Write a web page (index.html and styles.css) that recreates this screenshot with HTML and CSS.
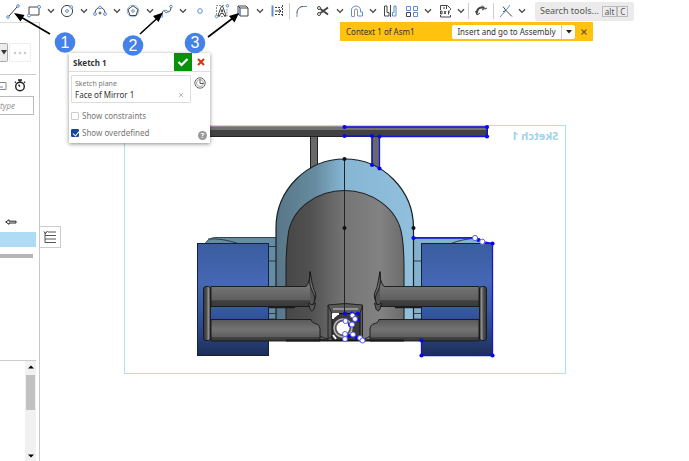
FILE: index.html
```html
<!DOCTYPE html>
<html lang="en">
<head>
<meta charset="utf-8">
<title>Sketch 1</title>
<link rel="stylesheet" href="styles.css">
</head>
<body>
<svg class="defs" width="0" height="0" aria-hidden="true">
  <symbol id="chev" viewBox="0 0 8 6"><path d="M1 1.2 4 4.4 7 1.2" fill="none" stroke="#444" stroke-width="1.3"/></symbol>
</svg>
<header class="toolbar">
  <button class="tool" aria-label="Line"><svg viewBox="0 0 16 16"><path d="M4 13 12 4" class="k"/><circle cx="3" cy="14" r="1.3" class="b"/><circle cx="13" cy="3" r="1.3" class="b"/></svg></button>
  <button class="tool pair" aria-label="Rectangle"><svg viewBox="0 0 16 16"><path d="M3 4h10v8H3z" class="k"/><circle cx="3" cy="12.5" r="1.5" class="b w"/><circle cx="13" cy="4" r="1.5" class="b w"/></svg></button><button class="more" aria-label="Rectangle options"><svg><use href="#chev"/></svg></button>
  <button class="tool pair" aria-label="Circle"><svg viewBox="0 0 16 16"><circle cx="8" cy="8" r="5.6" class="k"/><circle cx="8" cy="8" r="1.4" class="b"/><circle cx="12.2" cy="4" r="1.3" class="b w"/></svg></button><button class="more" aria-label="Circle options"><svg><use href="#chev"/></svg></button>
  <button class="tool pair" aria-label="Arc"><svg viewBox="0 0 16 16"><path d="M3 10a5 5.500 0 0 1 10 0" class="k"/><circle cx="3" cy="11" r="1.4" class="b w"/><circle cx="13" cy="11" r="1.4" class="b w"/><circle cx="8" cy="4.500" r="1.3" class="b w"/><path d="M6.500 10h3M8 8.500v3" class="k"/></svg></button><button class="more" aria-label="Arc options"><svg><use href="#chev"/></svg></button>
  <button class="tool pair" aria-label="Polygon"><svg viewBox="0 0 16 16"><circle cx="8" cy="8" r="5.800" class="b faint"/><path d="M8 2.800 13 6.500 11 12.500H5L3 6.500z" class="k"/><circle cx="8" cy="8" r="1.300" class="b"/></svg></button><button class="more" aria-label="Polygon options"><svg><use href="#chev"/></svg></button>
  <button class="tool pair" aria-label="Spline"><svg viewBox="0 0 16 16"><path d="M4 12C4 6 7 8 8 8.500S13 10 13 4" class="k"/><circle cx="3.500" cy="13" r="1.300" class="b w"/><circle cx="8" cy="8.500" r="1.300" class="b w"/><circle cx="13" cy="3.500" r="1.300" class="b w"/></svg></button><button class="more" aria-label="Spline options"><svg><use href="#chev"/></svg></button>
  <button class="tool" aria-label="Point"><svg viewBox="0 0 16 16"><circle cx="8" cy="8" r="2.300" class="b"/></svg></button>
  <button class="tool" aria-label="Text"><svg viewBox="0 0 16 16"><path d="M2.500 12V2.500H11M4 13.500H13V6" class="k dash faint"/><path d="M4 12.500 7.300 3.500h1.400L12 12.500H10L9.300 10.500H6.700L6 12.500zM7.200 8.800h1.600L8 6.500z" class="k"/><circle cx="13.500" cy="2.800" r="1.300" class="b"/><circle cx="2.500" cy="13.500" r="1.300" class="b w"/></svg></button>
  <button class="tool pair" aria-label="Use"><svg viewBox="0 0 16 16"><path d="M5 5h8v8H5zM5 5 3 3v8l2 2M3 3h8l2 2" class="k"/><path d="M5 5v8" class="b"/></svg></button><button class="more" aria-label="Use options"><svg><use href="#chev"/></svg></button>
  <button class="tool" aria-label="Dimension"><svg viewBox="0 0 16 16"><path d="M3.500 2.500v11" class="b t"/><path d="M6 4.500h7M6 11.500h7M13.500 2v12" class="k dash"/><path d="M6 8h6M10 6l2 2-2 2" class="k"/></svg></button>
  <i class="sep"></i>
  <button class="tool" aria-label="Fillet"><svg viewBox="0 0 16 16"><path d="M3 10C3 6 6 3.500 9 3.500" class="k"/><path d="M3 10v4M9 3.500h4" class="b"/></svg></button>
  <button class="tool pair" aria-label="Trim"><svg viewBox="0 0 16 16"><path d="M5.500 6 13 11.500M5.500 10 13 4.500" class="k t"/><circle cx="4" cy="5" r="1.500" class="k"/><circle cx="4" cy="11" r="1.500" class="k"/></svg></button><button class="more" aria-label="Trim options"><svg><use href="#chev"/></svg></button>
  <button class="tool pair" aria-label="Offset"><svg viewBox="0 0 16 16"><path d="M3.500 13V7a4.500 4 0 0 1 9 0v2h2v4H10" class="b"/><path d="M6.500 13V7.500a1.500 1.500 0 0 1 3 0V13M3.500 13.500h3" class="k faint"/></svg></button><button class="more" aria-label="Offset options"><svg><use href="#chev"/></svg></button>
  <button class="tool" aria-label="Mirror"><svg viewBox="0 0 16 16"><path d="M2.500 3v10H7V9.500H5V3zM8.500 2v12" class="k"/><path d="M14 3v10h-3.500V9.500h1.500V3z" class="b"/></svg></button>
  <button class="tool pair" aria-label="Pattern"><svg viewBox="0 0 16 16"><path d="M3.500 9.500h4v4h-4z" class="k"/><path d="M3.500 3.500h4v4h-4zM10.500 3.500h4v4h-4zM10.500 9.500h4v4h-4z" class="b"/></svg></button><button class="more" aria-label="Pattern options"><svg><use href="#chev"/></svg></button>
  <button class="tool pair" aria-label="Insert DXF"><svg viewBox="0 0 16 16"><path d="M4.500 7V2.500h7l3 3V7M4.500 12v2h10v-2M10.500 2.500V6M7 5h2" class="k"/><path d="M4.500 8v3H6V8zM8 8l2 3M10 8 8 11M12.500 11.500V8H14M12.500 9.500h1" class="k"/></svg></button><button class="more" aria-label="Insert options"><svg><use href="#chev"/></svg></button>
  <i class="sep"></i>
  <button class="tool" aria-label="Show dimension"><svg viewBox="0 0 16 16"><path d="M4 10.500C3.500 6 7 3.500 11 5" class="k t"/><path d="M2.500 8 4 12l3-2M9 2.500 12 5.500 9 7M12 6l2-1" class="k"/></svg></button>
  <i class="sep"></i>
  <button class="tool pair" aria-label="Constraint"><svg viewBox="0 0 16 16"><path d="M3 14 8.500 8 13 2" class="b"/><path d="M6 3.500 9 7.500l6 6M6 9l2.500-1.500" class="k"/></svg></button><button class="more" aria-label="Constraint options"><svg><use href="#chev"/></svg></button>
  <button class="search"><span>Search tools...</span><kbd>alt</kbd><kbd>C</kbd></button>
</header>
<main class="workspace">
  <aside class="sidebar">
    <div class="side-top">
      <button class="drop" aria-label="Open menu"><svg viewBox="0 0 6 5"><path d="M0 0h6L3 4.500z" fill="#333"/></svg></button>
      <button class="dots" aria-label="More"><svg viewBox="0 0 14 4"><circle cx="2" cy="2" r="1.300"/><circle cx="7" cy="2" r="1.300"/><circle cx="12" cy="2" r="1.300"/></svg></button>
    </div>
    <div class="side-tools">
      <svg class="tag" viewBox="0 0 7 8"><path d="M0 .5h6v7H0" fill="none" stroke="#888"/><path d="M0 5h3" stroke="#5b8bd0"/></svg>
      <svg class="watch" viewBox="0 0 12 13"><circle cx="6" cy="7.500" r="4.300" fill="none" stroke="#222" stroke-width="1.400"/><path d="M4 1h4M6 1v2M6 7.500 4.500 5.800M10 2.800l1 1M2 2.800l-1 1" fill="none" stroke="#222" stroke-width="1.400"/></svg>
    </div>
    <input class="filter" type="text" placeholder="type" aria-label="Filter by type">
    <svg class="back" viewBox="0 0 12 6"><path d="M.7 3 4 .8v1.400h7v1.800H4v1.300z" fill="#fff" stroke="#222"/></svg>
    <div class="selected"></div>
    <div class="rollback"></div>
    <div class="parts"><div class="scroll">
      <svg viewBox="0 0 6 4"><path d="M0 3.500 3 .5l3 3z"/></svg><i class="thumb"></i><svg class="down" viewBox="0 0 6 4"><path d="M0 .5 3 3.500 6 .5z"/></svg>
    </div></div>
  </aside>
  <section class="canvas">
    <svg class="model" viewBox="120 121 450 258" role="img" aria-label="Front view of the car model">
      <defs>
        <linearGradient id="shell"><stop offset="0" stop-color="#587687"/><stop offset=".28" stop-color="#668b9f"/><stop offset=".5" stop-color="#86b6d4"/><stop offset="1" stop-color="#91c0dd"/></linearGradient>
        <linearGradient id="nose"><stop offset="0" stop-color="#474747"/><stop offset=".2" stop-color="#505050"/><stop offset=".5" stop-color="#757575"/><stop offset=".8" stop-color="#828282"/><stop offset="1" stop-color="#6c6c6c"/></linearGradient>
        <linearGradient id="tire" x2="0" y2="1"><stop offset="0" stop-color="#3a5ca0"/><stop offset=".35" stop-color="#4668b4"/><stop offset=".6" stop-color="#3558a3"/><stop offset=".85" stop-color="#263f79"/><stop offset="1" stop-color="#1d2d57"/></linearGradient>
        <linearGradient id="slab" x2="0" y2="1"><stop offset="0" stop-color="#595959"/><stop offset=".45" stop-color="#737373"/><stop offset=".8" stop-color="#5f5f5f"/><stop offset=".84" stop-color="#404040"/><stop offset="1" stop-color="#393939"/></linearGradient>
        <linearGradient id="cap"><stop offset="0" stop-color="#333"/><stop offset=".45" stop-color="#505050"/><stop offset=".7" stop-color="#909090"/><stop offset="1" stop-color="#333"/></linearGradient>
        <g id="wing" stroke="#171717" stroke-width=".9">
          <path d="M211 286.500H306C309 283 310.500 277 310 271.500C312 281 312 286 315 292C317 298 314 302 311.500 306.500H211z" fill="url(#slab)"/>
          <path d="M310 272C308 288 313 290 314.500 297C315 303 312 307 310 304" fill="#555"/>
          <path d="M309 303C309 308 311 314 314 309L315.500 303C313 305 311 305 309 303z" fill="#565656"/>
          <path d="M211 319.500H311C313 326 319 321 320 329V341H211z" fill="url(#slab)"/>
          <rect x="203.500" y="286.500" width="7" height="54" rx="2.500" fill="url(#cap)"/>
        </g>
      </defs>
      <rect x="124.500" y="125.500" width="441" height="248" fill="#fff" stroke="#b3def3"/>
      <path d="M310.500 136H317.500V180H310.500zM372 136H379.500V180H372z" fill="#696969" stroke="#222"/>
      <rect x="202.500" y="127" width="285" height="9.500" fill="#424242" stroke="#222"/><path d="M203 128.500H487" stroke="#727272" stroke-width="3"/>
      <g stroke="#26343d" stroke-width=".9">
        <path d="M205 243.500C210 237 213 237.500 221 237.500H278V319H265V243.500z" fill="#648da4"/>
        <path d="M484 243.500C479 237 476 237.500 468 237.500H411V319H424V243.500z" fill="#84b1cb"/>
        <path d="M208 239Q222 238 238 243.500M478 238Q462 239 451 243.500M269 246.500H279M278.500 246.500V319M269 261H279M269 313.500H279M411.500 247V319M411.500 261H421M411.500 313.500H421" fill="none"/>
      </g>
      <rect x="197.500" y="243.500" width="71" height="112" fill="url(#tire)" stroke="#15203d"/>
      <rect x="421.500" y="243.500" width="71" height="112" fill="url(#tire)" stroke="#15203d"/>
      <path d="M276 319V228A68.750 69 0 0 1 413.500 228V319z" fill="url(#shell)"/>
      <path d="M276 319V228A68.750 69 0 0 1 413.500 228V319" fill="none" stroke="#182025" stroke-width="1.200"/>
      <path d="M286 340V270C286 250 287 245 288 236C291 207 319 190.500 344.500 190.500S398 207 402 236C403.500 245 404 250 404 270V340z" fill="url(#nose)" stroke="#222" stroke-width="1.100"/>
      <path d="M269 307.500H295M421 307.500H395" stroke="#1b1b1b" stroke-width="1.500"/>
      <use href="#wing"/><use href="#wing" transform="matrix(-1 0 0 1 690 0)"/>
      <path d="M286 340.500H404" stroke="#191919" stroke-width="2"/>
      <path d="M328 340V305Q345 302 362.500 305V340" fill="#5a5a5a" stroke="#222"/>
      <path d="M333 309H358" stroke="#929292" stroke-width="2"/>
      <path d="M332 340V313.500H360V340z" fill="#393939" stroke="#111"/>
      <path d="M333 319V314H339M333 335L336 339" stroke="#fff" stroke-width="2" fill="#fff"/>
      <circle cx="343" cy="328" r="9" fill="#555" stroke="#b6b6b6" stroke-width="1.500"/>
      <circle cx="343" cy="328" r="6.500" fill="#fff"/>
      <path d="M328 305 332 313.500M362.500 305 360 313.500M320 336Q328 341 332 336M360 336Q364 341 370 336" fill="none" stroke="#222"/>
      <path d="M344.500 159V315" stroke="#222" stroke-width="1"/>
      <g fill="#111"><circle cx="344.500" cy="159" r="2"/><circle cx="344.500" cy="228" r="2"/><circle cx="413.500" cy="228" r="2"/></g>
      <g fill="none" stroke="#1515dc" stroke-width="1.300">
        <path d="M344.500 127H487V136.500H379.500V168.500M344.500 136H372V165M413.500 238H475L482 241.500L492.500 243.500V355.500H421.500V340.500"/>
      </g>
      <g fill="#0707f4"><circle cx="344.500" cy="127" r="2.100"/><circle cx="344.500" cy="136" r="2.100"/><circle cx="487" cy="127" r="2.100"/><circle cx="487" cy="136.500" r="2.100"/><circle cx="372" cy="136" r="2.100"/><circle cx="379.500" cy="136.500" r="2.100"/><circle cx="372" cy="165" r="2.100"/><circle cx="379.500" cy="168.500" r="2.100"/><circle cx="413.500" cy="238" r="2.100"/><circle cx="492.500" cy="243.500" r="2.100"/><circle cx="492.500" cy="355.500" r="2.100"/><circle cx="421.500" cy="355.500" r="2.100"/><circle cx="421.500" cy="340.500" r="2.100"/><circle cx="478.500" cy="240" r="2"/><circle cx="345" cy="313.500" r="2"/><circle cx="352" cy="313.500" r="2"/><circle cx="358" cy="313.500" r="2"/><circle cx="358" cy="320" r="2"/><circle cx="350" cy="325" r="2"/><circle cx="349" cy="336" r="2"/><circle cx="357" cy="338" r="2"/></g>
      <g fill="#fff" stroke="#4c4cf5" stroke-width=".9"><circle cx="475" cy="238" r="2.600"/><circle cx="482.300" cy="241.700" r="2.600"/><circle cx="352.500" cy="315.500" r="2.500"/><circle cx="355" cy="319" r="2.500"/><circle cx="345.500" cy="321" r="2.500"/><circle cx="352" cy="324.500" r="2.500"/><circle cx="345" cy="334" r="2.500"/><circle cx="345" cy="339" r="2.500"/><circle cx="353" cy="334.500" r="2.500"/><circle cx="360" cy="338" r="2.500"/><circle cx="362.500" cy="340.500" r="2.500"/></g>
    </svg>
    <span class="plane-name">Sketch 1</span>
    <button class="list-tab" aria-label="Feature list"><svg viewBox="0 0 14 14"><path d="M5 2h8M5 5.500h8M5 9h8M5 12.500h8M2 3v9.500h3M2 5.500h3M2 9h3" fill="none" stroke="#555"/><path d="M1 1.500 2.500 3.500 4.500 1" fill="none" stroke="#222"/></svg></button>
    <div class="context">
      <span class="context-name">Context 1 of Asm1</span>
      <button class="go">Insert and go to Assembly</button><button class="go-more" aria-label="Assembly options"><svg viewBox="0 0 6 4"><path d="M0 0h6L3 3.500z" fill="#222"/></svg></button>
      <button class="close" aria-label="Close context"><svg viewBox="0 0 8 8"><path d="M1.500 1.500l5 5M6.500 1.500l-5 5" stroke="#6b5a25" stroke-width="1.100"/></svg></button>
    </div>
    <form class="dialog">
      <div class="dialog-head">
        <h2>Sketch 1</h2>
        <button type="button" class="accept" aria-label="Accept"><svg viewBox="0 0 12 10"><path d="M1.500 5 4.500 8 10.500 2" fill="none" stroke="#fff" stroke-width="2.200"/></svg></button>
        <button type="button" class="cancel" aria-label="Cancel"><svg viewBox="0 0 8 8"><path d="M1 1l6 6M7 1 1 7" stroke="#d9300f" stroke-width="2"/></svg></button>
      </div>
      <div class="dialog-body">
        <div class="plane-row">
          <div class="field">
            <label for="plane">Sketch plane</label>
            <div class="value"><input id="plane" type="text" value="Face of Mirror 1"><button type="button" aria-label="Clear"><svg viewBox="0 0 6 6"><path d="M1 1l4 4M5 1 1 5" stroke="#bbb"/></svg></button></div>
          </div>
          <button type="button" class="clock" aria-label="Final"><svg viewBox="0 0 12 12"><circle cx="6" cy="6" r="5.200" fill="none" stroke="#666"/><circle cx="6" cy="6" r="3.500" fill="none" stroke="#aaa"/><path d="M6 2.500V6.500H9.500" fill="none" stroke="#555"/></svg></button>
        </div>
        <label class="check"><input type="checkbox">Show constraints</label>
        <label class="check"><input type="checkbox" checked>Show overdefined</label>
        <button type="button" class="help" aria-label="Help">?</button>
      </div>
    </form>
  </section>
</main>
<svg class="notes" viewBox="0 0 240 60" aria-hidden="true">
  <g stroke="#000" stroke-width="1.600"><path d="M50 34 20 16.500M140 34 158 17.500M208 37 233 18"/></g>
  <path d="M14 13 24.500 15 20.500 21.500zM163 12.500 158.500 22 153 16zM239 13 234.500 22.500 229 16z"/>
  <g fill="#4481e8"><circle cx="65" cy="42.500" r="10.300"/><circle cx="133" cy="45.500" r="10.300"/><circle cx="195" cy="43" r="10.300"/></g>
  <g fill="#fff" text-anchor="middle"><text x="65" y="48">1</text><text x="133" y="51">2</text><text x="195" y="48">3</text></g>
</svg>
</body>
</html>
```
FILE: styles.css
```css
* { box-sizing: border-box; }
body {
  margin: 0;
  height: 100vh;
  display: flex;
  flex-direction: column;
  overflow: hidden;
  background: #fff;
  color: #333;
  font: 8px/12px "Noto Sans", Roboto, sans-serif;
}
button, input { font: inherit; color: inherit; }
button { display: flex; align-items: center; justify-content: center; padding: 0; border: 0; background: none; }
svg { display: block; flex: none; }
.defs { position: absolute; }

.toolbar { display: flex; align-items: center; flex: none; height: 22px; padding-left: 2px; }
.tool { flex: none; width: 22px; height: 20px; }
.tool.pair { width: 20px; }
.tool svg { width: 16px; height: 16px; }
.more { flex: none; width: 13px; height: 20px; }
.more svg { width: 8px; height: 6px; }
.k { fill: none; stroke: #444; }
.b { fill: none; stroke: #5b8fd8; }
.w { fill: #fff; }
.t { stroke-width: 2; }
.faint { opacity: .6; }
.dash { stroke-dasharray: 2 1; }
.sep { flex: none; width: 1px; height: 16px; margin: 0 1px; background: #ccc; }
.search { height: 19px; margin-left: 7px; padding: 0 6px 0 5px; background: #ebebeb; border-radius: 2px; color: #555; }
.search span { margin-right: 3px; font-size: 9px; }
kbd { padding: 0 2px; border: 1px solid #bbb; font: inherit; line-height: 9px; }

.workspace { display: flex; flex: 1; min-height: 0; }
.sidebar { display: flex; flex-direction: column; flex: none; width: 40px; padding-right: 3px; border-top: 1px solid #ddd; border-right: 1px solid #c8c8c8; }
.side-top { display: flex; gap: 1px; height: 52px; padding-top: 20px; border-bottom: 1px solid #ccc; }
.drop { width: 8px; height: 19px; border: 1px solid #aaa; border-left: 0; border-radius: 0 2px 2px 0; background: #ececec; }
.drop svg { width: 6px; height: 5px; }
.dots { width: 22px; height: 19px; border: 1px solid #eee; border-radius: 2px; fill: #ccc; }
.dots svg { width: 14px; height: 4px; }
.side-tools { display: flex; align-items: center; gap: 7px; height: 21px; }
.tag { width: 7px; height: 8px; }
.watch { width: 12px; height: 13px; }
.filter { width: 34px; height: 19px; padding: 0; border: 1px solid #bbb; border-left: 0; border-radius: 0 1px 1px 0; }
.filter::placeholder { color: #999; font-style: italic; }
.back { width: 12px; height: 6px; margin: 104px 0 7px 5px; }
.selected { height: 15px; background: #aedcf4; }
.rollback { width: 33px; height: 4px; margin-top: 7px; background: #b5b5b5; }
.parts { display: flex; flex: 1; justify-content: flex-end; margin-top: 102px; border-top: 1px solid #ccc; }
.scroll { display: flex; flex-direction: column; align-items: center; width: 11px; padding: 4px 0 3px; background: #f1f1f1; }
.scroll svg { width: 6px; height: 4px; }
.scroll .down { margin-top: auto; }
.thumb { width: 9px; height: 35px; margin-top: 6px; background: #c1c1c1; }

.canvas { position: relative; flex: 1; }
.model { position: absolute; left: 80px; top: 99px; width: 450px; height: 258px; }
.plane-name { position: absolute; left: 472px; top: 107px; color: #9fd2ef; font: bold 11px/14px "Noto Sans", sans-serif; transform: scaleX(-1); }
.list-tab { position: absolute; left: 0; top: 204px; width: 21px; height: 22px; border: 1px solid #ccc; border-left: 0; background: #fff; }
.list-tab svg { width: 14px; height: 14px; }
.context { position: absolute; left: 300px; top: 0; display: flex; align-items: center; height: 19px; padding-left: 6px; background: #ffc20e; white-space: nowrap; }
.context-name { width: 106px; }
.go, .go-more, .close { height: 14px; background: #fff; }
.go { width: 109px; border-radius: 2px 0 0 2px; }
.go-more { width: 14px; border-left: 1px solid #ccc; border-radius: 0 2px 2px 0; }
.go-more svg { width: 6px; height: 4px; }
.close { width: 18px; background: none; }
.close svg { width: 8px; height: 8px; }

.dialog { position: absolute; left: 29px; top: 31px; width: 141px; background: #fff; box-shadow: 0 1px 4px rgba(0, 0, 0, .45); }
.dialog-head { display: flex; height: 19px; border-bottom: 1px solid #ddd; }
h2 { flex: 1; margin: 0 0 0 4px; font-size: 8px; line-height: 19px; }
.accept { width: 18px; height: 18px; background: #079307; }
.accept svg { width: 12px; height: 10px; }
.cancel { width: 18px; }
.cancel svg { width: 8px; height: 8px; }
.dialog-body { position: relative; padding: 3px 2px 4px; }
.plane-row { display: flex; gap: 2px; margin-bottom: 7px; }
.field { width: 120px; height: 28px; padding: 2px 6px 0 3px; border: 1px solid #ddd; border-radius: 1px; }
.field label { display: block; color: #777; font-size: 7px; line-height: 11px; }
.value { display: flex; align-items: center; }
.value input { flex: 1; width: 0; height: 12px; padding: 0; border: 0; background: none; }
.value svg { width: 6px; height: 6px; }
.clock { width: 14px; height: 16px; }
.clock svg { width: 12px; height: 12px; }
.check { display: flex; align-items: center; gap: 3px; margin-bottom: 5px; color: #777; }
.check:last-of-type { margin-bottom: 0; }
.check input { appearance: none; width: 8px; height: 8px; margin: 0; border: 1px solid #ccc; border-radius: 1px; }
.check input:checked { border-color: #1446a0; background: #1446a0; }
.check input:checked::after { content: ""; display: block; width: 3px; height: 5px; margin: 0 0 0 2px; border: solid #fff; border-width: 0 1px 1px 0; transform: rotate(40deg); }
.help { position: absolute; right: 3px; bottom: 3px; width: 9px; height: 9px; border-radius: 50%; background: #999; color: #fff; font-size: 7px; font-weight: bold; line-height: 9px; }

.notes { position: absolute; left: 0; top: 0; width: 240px; height: 60px; pointer-events: none; font: 16px "Liberation Sans", sans-serif; }
```
